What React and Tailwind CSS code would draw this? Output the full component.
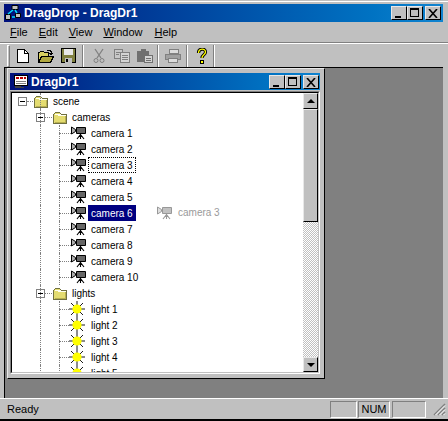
const cameras = ['camera 1', 'camera 2', 'camera 3', 'camera 4', 'camera 5', 'camera 6', 'camera 7', 'camera 8', 'camera 9', 'camera 10'];
const lights = ['light 1', 'light 2', 'light 3', 'light 4', 'light 5'];

const raised = 'border border-t-[#e8e8e8] border-l-[#e8e8e8] border-r-black border-b-black';
const sunken = 'border border-t-[#808080] border-l-[#808080] border-r-white border-b-white';

const Folder = () => (
  <svg width="16" height="14" viewBox="0 0 16 14" className="block shrink-0" shapeRendering="crispEdges">
    <path d="M1.5 13.5v-9l2-2h4l2 2h5v9z" fill="#e4dc70" stroke="#707040" />
    <path d="M2 5h4v1h8V5H9L8 4H3z" fill="#fffff0" />
    <path d="M13 6h1v7h-1zM3 12h10v1H3z" fill="#b8b050" />
  </svg>
);

const CameraIcon = ({ faded }) => (
  <svg width="16" height="14" viewBox="0 0 16 14" className={`block shrink-0 ${faded ? 'opacity-40' : ''}`}>
    <path d="M5.5 1.5h9v6h-9z" fill="#666" stroke="#000" />
    <path d="M.5 1v7l4-2.5v-2z" fill="#b0b0b0" stroke="#000" />
    <path d="M9.5 8v5M9.5 8.5 6 13M9.5 8.5 13 13" stroke="#000" strokeWidth="1.1" fill="none" />
  </svg>
);

const Sun = () => (
  <svg width="16" height="16" viewBox="0 0 16 16" className="block shrink-0">
    <path d="M8 0v16M0 8h16M2 2l12 12M14 2 2 14" stroke="#000" strokeWidth="0.9" />
    <circle cx="8" cy="8" r="4.6" fill="#ffff00" />
  </svg>
);

const Expander = () => (
  <span className="flex w-[9px] h-[9px] items-center justify-center border border-[#808080] bg-white shrink-0">
    <span className="w-[5px] h-px bg-black"></span>
  </span>
);

const WinButton = ({ children }) => (
  <div className={`relative w-[16px] h-[14px] bg-[#c0c0c0] ${raised}`}>{children}</div>
);

const WinButtons = () => (
  <div className="flex items-center">
    <WinButton>
      <span className="absolute left-[3px] bottom-[1px] w-[6px] h-[2px] bg-black"></span>
    </WinButton>
    <WinButton>
      <span className="absolute left-[2px] top-[1px] w-[9px] h-[9px] border border-black border-t-2"></span>
    </WinButton>
    <div className="w-[2px]"></div>
    <WinButton>
      <svg width="10" height="9" viewBox="0 0 10 9" className="absolute left-[2px] top-[2px]">
        <path d="M1 0l8 9M9 0 1 9" stroke="#000" strokeWidth="1.6" />
      </svg>
    </WinButton>
  </div>
);

const TreeRow = ({ indent, children }) => (
  <div className="relative flex items-center h-4 shrink-0" style={{ paddingLeft: indent }}>
    {children}
  </div>
);

// dotted verticals run down the row at the parent's icon centre
const VLine = ({ left }) => (
  <span className="absolute top-0 bottom-0 border-l border-dotted border-[#808080]" style={{ left }}></span>
);

const HLine = ({ width }) => (
  <span className="border-t border-dotted border-[#808080] shrink-0" style={{ width }}></span>
);

const Label = ({ children, state }) => {
  let cls = 'border border-transparent';
  if (state === 'focus') cls = 'border border-dotted border-black';
  if (state === 'selected') cls = 'border border-[#000080] bg-[#000080] text-white';
  return <span className={`${cls} ml-[1px] px-[2px] h-4 leading-[15px] whitespace-nowrap`}>{children}</span>;
};

const ToolIcon = ({ children }) => (
  <div className="flex items-center justify-center w-[23px] h-[22px]">{children}</div>
);

const ToolSep = ({ className }) => (
  <div className={`w-[2px] h-[22px] border-l border-l-[#808080] border-r border-r-white ${className}`}></div>
);

export default function App() {
  return (
    <div className="w-[448px] h-[421px] overflow-hidden bg-[#c0c0c0] flex flex-col pt-[1px] pl-[4px] pr-[5px] text-[11px] text-black border-b-2 border-black" style={{ fontFamily: '"Liberation Sans", sans-serif' }}>
      <div className="h-px shrink-0 -ml-[4px] -mr-[5px] bg-white"></div>
      <div className="h-[2px] shrink-0"></div>

      {/* Title */}
      <div className="h-[18px] flex items-center justify-between shrink-0 bg-gradient-to-r from-[#00107c] to-[#1084d0] pr-[2px]">
        <div className="flex items-center gap-[3px] pl-[1px]">
          <svg width="16" height="16" viewBox="0 0 16 16" className="block">
            <path d="M7 0.5h6v4H7zM0.5 9.5h5v5h-5zM10.5 8.5h5v4h-5z" fill="#c0c0c0" stroke="#000" />
            <path d="M3 9 8 5M12 8 10 5M7 12h3" stroke="#00e0ff" strokeWidth="1.5" />
          </svg>
          <span className="text-white font-bold text-[12px]">DragDrop - DragDr1</span>
        </div>
        <WinButtons />
      </div>

      {/* Menu */}
      <div className="h-[20px] flex items-center shrink-0 gap-[11px] pl-[6px]">
        <span><u>F</u>ile</span>
        <span><u>E</u>dit</span>
        <span><u>V</u>iew</span>
        <span><u>W</u>indow</span>
        <span className="ml-[1px]"><u>H</u>elp</span>
      </div>
      <div className="h-[2px] shrink-0 -ml-[4px] -mr-[5px] border-t border-t-[#808080] border-b border-b-white"></div>

      {/* Toolbar */}
      <div className="h-[23px] flex items-center shrink-0 pl-[3px]">
        <div className="w-[3px] h-[22px] mr-[1px] border-l border-t border-white border-r border-r-[#808080] border-b border-b-[#808080]"></div>
        <ToolIcon>
          <svg width="12" height="14" viewBox="0 0 12 14" shapeRendering="crispEdges">
            <path d="M.5.5h7l4 4v9H.5z" fill="#fff" stroke="#000" />
            <path d="M7.5.5v4h4" fill="none" stroke="#000" />
          </svg>
        </ToolIcon>
        <ToolIcon>
          <svg width="16" height="14" viewBox="0 0 16 14" shapeRendering="crispEdges">
            <path d="M.5 13V3.5h1l1-1h3l1 1h4v3" fill="#d8d060" stroke="#000" />
            <path d="M.5 13.5l3-6h12l-3 6z" fill="#b0a840" stroke="#000" />
            <path d="M9 1h4v1h1v2h1l-2 3-2-3h2V3h-1V2H9z" fill="#000" />
          </svg>
        </ToolIcon>
        <ToolIcon>
          <svg width="15" height="15" viewBox="0 0 15 15" shapeRendering="crispEdges">
            <path d="M.5.5h14v14H.5z" fill="#808040" stroke="#000" />
            <path d="M3 1h9v6H3z" fill="#e8e8e8" />
            <path d="M4 10h7v5H4z" fill="#c0c0c0" />
            <path d="M5 11h2v3H5z" fill="#000" />
          </svg>
        </ToolIcon>
        <ToolSep className="ml-[2px] mr-[3px]" />
        <ToolIcon>
          <svg width="12" height="16" viewBox="0 0 12 16" fill="none" stroke="#808080">
            <path d="M2 1l6 9M10 1 4 10" strokeWidth="1.3" />
            <circle cx="3" cy="12.5" r="2" />
            <circle cx="9" cy="12.5" r="2" />
          </svg>
        </ToolIcon>
        <ToolIcon>
          <svg width="16" height="14" viewBox="0 0 16 14" shapeRendering="crispEdges">
            <path d="M.5.5h8v9h-8z" fill="#c8c8c8" stroke="#808080" />
            <path d="M6.5 3.5h9v10h-9z" fill="#d4d4d4" stroke="#808080" />
            <path d="M8 6h6M8 8h6M8 10h6M2 3h4M2 5h3" stroke="#808080" />
          </svg>
        </ToolIcon>
        <ToolIcon>
          <svg width="16" height="14" viewBox="0 0 16 14" shapeRendering="crispEdges">
            <path d="M0 2h12v11H0z" fill="#707070" />
            <path d="M4 0h5v3H4z" fill="#707070" />
            <path d="M7.5 6.5h8v7h-8z" fill="#d4d4d4" stroke="#707070" />
            <path d="M9 9h5M9 11h5" stroke="#707070" />
          </svg>
        </ToolIcon>
        <ToolSep className="ml-[1px] mr-[2px]" />
        <ToolIcon>
          <svg width="16" height="14" viewBox="0 0 16 14" shapeRendering="crispEdges">
            <path d="M4.5.5h9v4h-9z" fill="#dcdcdc" stroke="#808080" />
            <path d="M.5 5.5h15v5H.5z" fill="#a0a0a0" stroke="#808080" />
            <path d="M3.5 9.5h9v4h-9z" fill="#dcdcdc" stroke="#808080" />
          </svg>
        </ToolIcon>
        <ToolSep className="ml-[2px] mr-[2px]" />
        <ToolIcon>
          <svg width="12" height="16" viewBox="0 0 12 16" fill="none">
            <path d="M2.5 5c0-5 7-5 7-1 0 3-3.5 2.5-3.5 6" stroke="#000" strokeWidth="3.2" />
            <path d="M2.5 5c0-5 7-5 7-1 0 3-3.5 2.5-3.5 6" stroke="#ffff00" strokeWidth="1.3" />
            <rect x="4.5" y="12.5" width="3" height="3" fill="#ffff00" stroke="#000" />
          </svg>
        </ToolIcon>
        <ToolSep />
      </div>

      {/* MDI client */}
      <div className="flex-1 min-h-0 bg-[#808080] border-t border-t-black border-l border-l-black pl-[2px]">
        <div className={`w-[318px] h-[311px] bg-[#c0c0c0] pl-[2px] pr-[4px] pt-[4px] pb-[4px] flex flex-col ${raised}`}>
          <div className="h-[17px] flex items-center justify-between shrink-0 bg-gradient-to-r from-[#00107c] to-[#1084d0] pr-[1px]">
            <div className="flex items-center gap-[2px] pl-[3px]">
              <svg width="16" height="16" viewBox="0 0 16 16" className="block" shapeRendering="crispEdges">
                <path d="M1.5 1.5h13v10h-13z" fill="#fff" stroke="#000" />
                <path d="M3 4h3M7 4h3M11 4h2" stroke="#c00000" strokeWidth="2" />
                <path d="M3 7h10M3 9h10" stroke="#808080" />
                <path d="M2 12h6v1h3v1H2z" fill="#404040" />
              </svg>
              <span className="text-white font-bold text-[12px]">DragDr1</span>
            </div>
            <WinButtons />
          </div>
          <div className={`flex-1 min-h-0 mt-[1px] flex ${sunken}`}>
            <div className="flex-1 min-h-0 flex border border-t-black border-l-black border-r-[#c0c0c0] border-b-[#c0c0c0]">
              {/* tree */}
              <div className="flex-1 min-w-0 overflow-hidden bg-white text-[10px] flex flex-col">
                <TreeRow indent={6}>
                  <VLine left={28} />
                  <Expander />
                  <HLine width={6} />
                  <Folder />
                  <Label>scene</Label>
                </TreeRow>
                <TreeRow indent={24}>
                  <VLine left={28} />
                  <Expander />
                  <HLine width={7} />
                  <Folder />
                  <Label>cameras</Label>
                </TreeRow>
                {cameras.map((c, i) => (
                  <TreeRow key={c} indent={47}>
                    <VLine left={28} />
                    <VLine left={47} />
                    <HLine width={12} />
                    <CameraIcon />
                    <Label state={i === 2 ? 'focus' : i === 5 ? 'selected' : undefined}>{c}</Label>
                    {i === 5 && (
                      <span className="absolute left-[145px] top-0 flex items-center gap-[5px] text-[#9a9a9a]">
                        <CameraIcon faded />
                        {'camera 3'}
                      </span>
                    )}
                  </TreeRow>
                ))}
                <TreeRow indent={24}>
                  <VLine left={28} />
                  <Expander />
                  <HLine width={7} />
                  <Folder />
                  <Label>lights</Label>
                </TreeRow>
                {lights.map((l) => (
                  <TreeRow key={l} indent={47}>
                    <VLine left={28} />
                    <VLine left={47} />
                    <HLine width={10} />
                    <Sun />
                    <span className="w-[2px]"></span>
                    <Label>{l}</Label>
                  </TreeRow>
                ))}
              </div>
              {/* scroll bar */}
              <div className="w-[15px] shrink-0 flex flex-col bg-[repeating-conic-gradient(#c0c0c0_0_25%,#ffffff_0_50%)] bg-[length:2px_2px]">
                <div className={`h-[16px] shrink-0 bg-[#c0c0c0] flex items-center justify-center ${raised}`}>
                  <span className="w-0 h-0 border-x-[4px] border-x-transparent border-b-[4px] border-b-black"></span>
                </div>
                <div className={`h-[113px] shrink-0 bg-[#c0c0c0] ${raised}`}></div>
                <div className="flex-1"></div>
                <div className={`h-[15px] shrink-0 bg-[#c0c0c0] flex items-center justify-center ${raised}`}>
                  <span className="w-0 h-0 border-x-[4px] border-x-transparent border-t-[4px] border-t-black"></span>
                </div>
              </div>
            </div>
          </div>
        </div>
      </div>

      {/* Status bar */}
      <div className="h-[21px] shrink-0 -ml-[4px] -mr-[5px] flex items-center pl-[7px] pr-[2px] border-t border-white">
        <span className="flex-1">Ready</span>
        <div className={`w-[27px] h-[17px] mr-[1px] ${sunken}`}></div>
        <div className={`w-[32px] h-[17px] mr-[2px] flex items-center justify-center ${sunken}`}>NUM</div>
        <div className={`w-[34px] h-[17px] ${sunken}`}></div>
        <svg width="14" height="14" viewBox="0 0 14 14" className="ml-[6px]">
          <path d="M13 2 2 13M13 6l-7 7M13 10l-3 3" stroke="#808080" strokeWidth="1.5" />
          <path d="M13 3.5 3.5 13M13 7.5 7.5 13M13 11.5 11.5 13" stroke="#fff" />
        </svg>
      </div>
    </div>
  );
}
